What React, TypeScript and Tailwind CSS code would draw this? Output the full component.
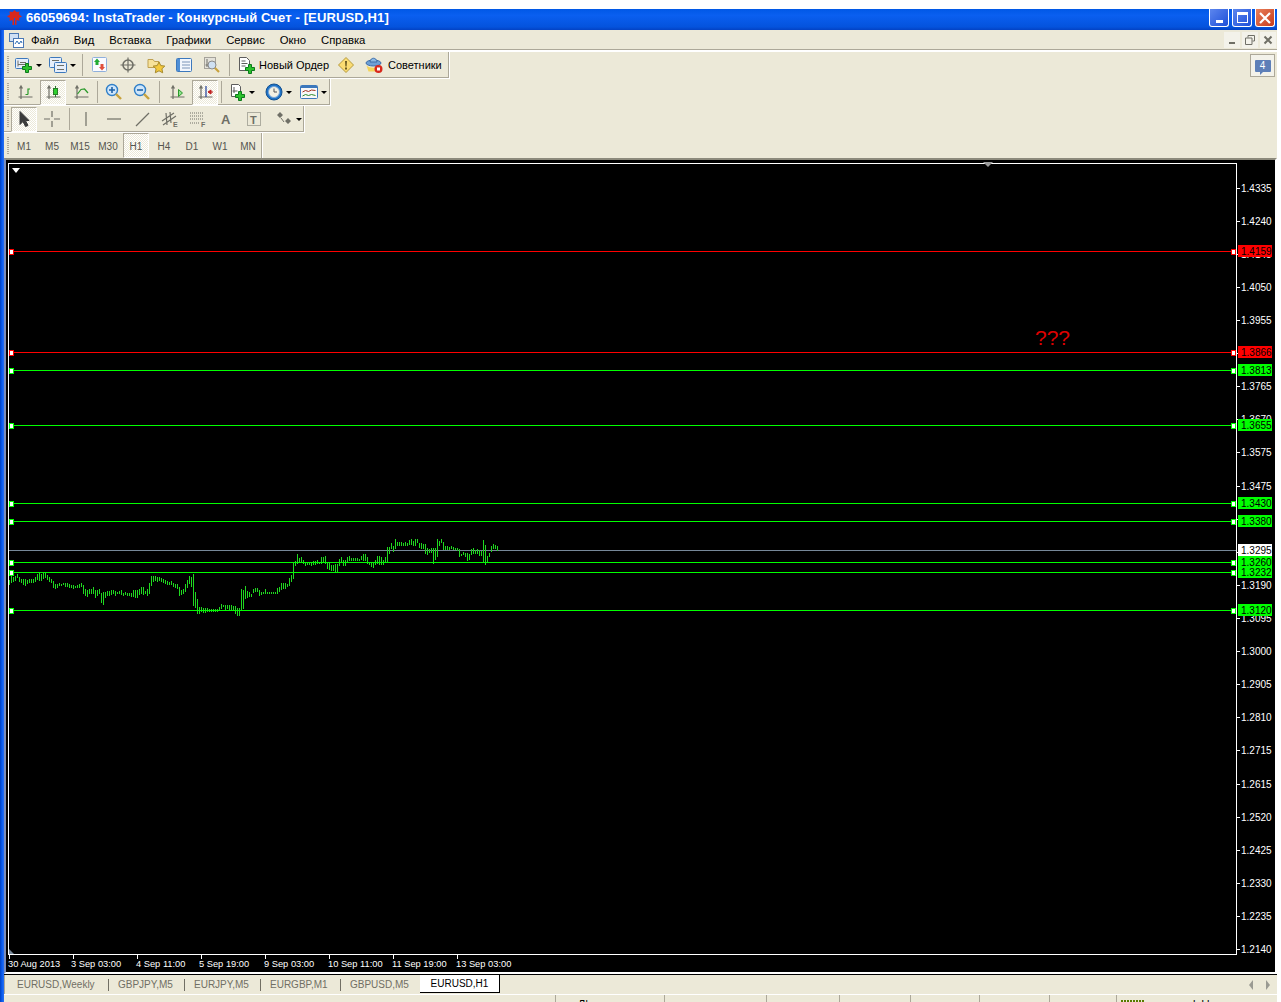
import React from 'react';

const font = { fontFamily: '"Liberation Sans", Arial, sans-serif' };

// high/low read off the chart, in 1/3 px above y=530, bars every 2px from x=9
const bars: [number, number][] = [
  [150,165],[138,160],[140,155],[138,153],[132,145],[142,156],[146,160],[148,165],[148,168],[150,162],[147,160],[147,158],[147,160],[142,155],[132,150],[128,152],[132,153],[128,147],[128,145],[135,150],[141,156],[147,160],[153,175],[163,177],[163,175],[159,168],[163,168],[159,165],[159,171],[159,171],[162,174],[165,175],[165,177],[168,174],[165,174],[162,174],[159,172],[165,192],[177,198],[180,201],[177,192],[177,192],[171,192],[180,204],[180,198],[177,192],[189,219],[186,225],[186,204],[183,198],[183,198],[180,195],[180,192],[183,198],[186,192],[183,192],[180,195],[189,198],[186,195],[189,198],[189,198],[189,201],[180,201],[180,204],[180,204],[177,195],[171,192],[171,195],[183,192],[177,198],[159,192],[138,168],[138,156],[138,153],[141,156],[141,153],[144,156],[147,159],[150,162],[153,165],[156,165],[153,165],[159,171],[162,174],[162,177],[171,198],[180,195],[177,192],[162,186],[150,174],[138,162],[141,171],[132,228],[186,234],[207,252],[231,252],[231,246],[234,249],[234,249],[234,246],[237,246],[237,246],[237,246],[237,246],[237,246],[231,243],[222,237],[225,231],[225,240],[225,237],[225,240],[225,240],[228,240],[228,252],[234,258],[234,258],[177,240],[180,237],[168,207],[183,204],[186,201],[192,201],[177,189],[174,186],[174,186],[180,198],
  [186,195],[186,192],[177,192],[186,192],[186,192],[186,192],[186,192],[186,192],[174,192],[171,186],[159,180],[159,177],[159,177],[162,171],[144,168],[135,156],[96,147],[93,108],[72,102],[84,99],[81,99],[90,102],[96,108],[96,105],[96,105],[96,108],[93,105],[93,105],[90,102],[96,102],[81,102],[81,96],[78,102],[96,117],[99,120],[105,123],[105,123],[102,127],[102,127],[87,108],[81,96],[90,108],[90,108],[81,99],[78,93],[84,93],[84,93],[84,93],[84,93],[87,93],[78,90],[72,93],[72,93],[81,102],[96,105],[99,111],[99,114],[90,105],[78,102],[78,105],[81,105],[90,105],[81,99],[51,96],[51,72],[39,57],[48,66],[27,57],[36,48],[36,48],[36,48],[39,48],[36,48],[39,48],[30,45],[27,45],[33,48],[27,48],[27,39],[39,54],[39,57],[42,57],[42,72],[54,75],[57,69],[54,69],[54,102],[54,90],[27,81],[33,48],[27,39],[36,60],[48,60],[48,60],[51,60],[48,57],[51,60],[54,60],[54,63],[57,81],[72,78],[66,75],[69,81],[69,93],[72,90],[57,75],[54,72],[60,72],[57,72],[60,78],[63,78],[30,96],[45,105],[78,96],[69,81],[48,66],[42,57],[45,57],[48,63],
];

const axisPrices: [string, number][] = [
  ['1.4335',188],['1.4240',221],['1.4145',254],['1.4050',287],['1.3955',320],['1.3860',353],['1.3765',386],['1.3670',419],['1.3575',452],['1.3475',486],['1.3380',519],['1.3285',552],['1.3190',585],['1.3095',618],['1.3000',651],['1.2905',684],['1.2810',717],['1.2715',750],['1.2615',784],['1.2520',817],['1.2425',850],['1.2330',883],['1.2235',916],['1.2140',949],
];

const levels: { y: number; price: string; color: string }[] = [
  { y: 251, price: '1.4159', color: '#ff0000' },
  { y: 352, price: '1.3866', color: '#ff0000' },
  { y: 370, price: '1.3813', color: '#00ff00' },
  { y: 425, price: '1.3655', color: '#00ff00' },
  { y: 503, price: '1.3430', color: '#00ff00' },
  { y: 521, price: '1.3380', color: '#00ff00' },
  { y: 562, price: '1.3260', color: '#00ff00' },
  { y: 572, price: '1.3232', color: '#00ff00' },
  { y: 610, price: '1.3120', color: '#00ff00' },
];

const timeLabels: [string, number, number][] = [
  ['30 Aug 2013', 8, 9],['3 Sep 03:00', 71, 73],['4 Sep 11:00', 136, 137],['5 Sep 19:00', 199, 201],['9 Sep 03:00', 264, 265],['10 Sep 11:00', 328, 329],['11 Sep 19:00', 392, 393],['13 Sep 03:00', 456, 457],
];

function Chart() {
  return (
    <div className="h-[816px] shrink-0 border-2 border-t-[#8c8a7c] border-l-[#7d8db8] border-r-white border-b-white bg-black">
      <svg viewBox="6 160 1269 812" className="block w-[1269px] h-[812px]" style={font}>
        <g shapeRendering="crispEdges">
          <path d="M8.5 163.5H1236.5V954.5H8.5Z" fill="none" stroke="#fff" />
          {axisPrices.map(([p, y]) => <path key={p} d={`M1236 ${y + 0.5}h4`} stroke="#fff" />)}
          {timeLabels.map(([t, , x]) => <path key={t} d={`M${x + 0.5} 955v4`} stroke="#fff" />)}
          <path d="M9 550.5H1236" stroke="#778899" />
          {bars.map(([hi, lo], i) => (
            <path key={i} d={`M${9.5 + i * 2} ${530 + Math.round(hi / 3)}V${530 + Math.round(lo / 3)}`} stroke="#1fd81f" />
          ))}
          {levels.map(l => (
            <g key={l.y}>
              <path d={`M9 ${l.y + 0.5}H1236`} stroke={l.color} />
              <rect x={9.5} y={l.y - 2} width={4} height={5} fill="#fff" stroke={l.color} />
              <rect x={1231.5} y={l.y - 2} width={4} height={5} fill="#fff" stroke={l.color} />
            </g>
          ))}
        </g>
        <path d="M12 168h8l-4 5z" fill="#fff" />
        <path d="M983 162h10l-5 5z" fill="#9a9a9a" />
        <path d="M9 949l5 5h-5z" fill="#778899" />
        <g fill="#fff">
          {axisPrices.map(([p, y]) => <text key={p} x={1241} y={y + 4} fontSize="10">{p}</text>)}
          {timeLabels.map(([t, x]) => <text key={t} x={x} y={967} fontSize="9.300">{t}</text>)}
        </g>
        {levels.map(l => (
          <g key={l.price} fontSize="10">
            <rect x={1238} y={l.y - 6} width={34} height={12} fill={l.color} />
            <text x={1241} y={l.y + 4} fill="#000">{l.price}</text>
          </g>
        ))}
        <rect x={1238} y={544} width={34} height={12} fill="#fff" />
        <text x={1241} y={554} fontSize="10" fill="#000">1.3295</text>
        <text x={1035} y={345} fontSize="21" fill="#dd0000">???</text>
      </svg>
    </div>
  );
}

/* ---- toolbar icons, all on a 18x18 box ---- */

const G = '#6f6f66';

function Ico({ children, w = 18 }: { children: React.ReactNode; w?: number }) {
  return <svg width={w} height={18} viewBox={`0 0 ${w} 18`} className="shrink-0">{children}</svg>;
}

const GreenPlus = ({ x, y }: { x: number; y: number }) => (
  <path transform={`translate(${x} ${y})`} d="M3.500.5h3v3h3v3h-3v3h-3v-3h-3v-3h3z" fill="#2cc22c" stroke="#0c7a1c" />
);

const Axes = () => <path d="M3 2v13M.5 13h14M1.500 4.500L3 2l1.500 2.500" fill="none" stroke={G} strokeWidth="1.200" />;

// the axis icons sit a little right of the middle of their button
const AxisIco = ({ children }: { children: React.ReactNode }) => (
  <Ico><g transform="translate(2 1)"><Axes />{children}</g></Ico>
);

const Icons: Record<string, React.ReactNode> = {
  newChart: <Ico><rect x=".5" y="2.500" width="13" height="10" rx="1" fill="#e6eefa" stroke="#3c78bc" /><path d="M3 4.500v6M3 8.500h8M5 6.500h6" stroke={G} /><GreenPlus x={7} y={7} /></Ico>,
  profiles: <Ico><rect x=".5" y="1.500" width="12" height="10" rx="1" fill="#e6eefa" stroke="#3c78bc" /><rect x="5.500" y="6.500" width="12" height="10" rx="1" fill="#e6eefa" stroke="#3c78bc" /><path d="M3 4.500h7M8 9.500h7M8 13.500h7" stroke={G} /></Ico>,
  market: <Ico><rect x="1.500" y="1.500" width="14" height="14" rx="1" fill="#fbfbff" stroke="#8fb0dc" /><path d="M6 2.500l3 3.500H7.500v3h-3v-3H3z" fill="#22aa33" /><path d="M11 14.500l3-3.500h-1.500V8h-3v3H8z" fill="#e0503c" /></Ico>,
  target: <Ico><circle cx="9" cy="9" r="5" fill="none" stroke={G} strokeWidth="1.600" /><path d="M9 1.500v15M1.500 9h15" stroke={G} strokeWidth="1.200" /></Ico>,
  folderStar: <Ico><path d="M1 3.500h5l1.500 2H12v6H1z" fill="#f7e29a" stroke="#bfa050" /><path d="M12 6l1.800 3.600 4 .5-2.900 2.700.8 4-3.700-2-3.700 2 .8-4-2.900-2.700 4-.5z" fill="#f4c93c" stroke="#a68a2c" /></Ico>,
  navigator: <Ico><rect x="1.500" y="2.500" width="15" height="13" rx="1" fill="#f2f6fd" stroke="#3c78bc" /><rect x="2" y="3" width="3" height="12" fill="#4f8fd6" /><path d="M7 6h8M7 9h8M7 12h8" stroke="#7b94b8" /></Ico>,
  tester: <Ico><rect x="1.500" y="1.500" width="11" height="11" fill="#e4e2da" stroke="#a5a29a" /><path d="M4 3v8M2.500 9h9" stroke={G} /><circle cx="9" cy="9" r="4" fill="#cfe0f2" stroke="#8a8a8a" /><path d="M12 12l4 4" stroke="#c8a23c" strokeWidth="2.200" /></Ico>,
  order: <Ico><path d="M2.500 1.500h7l3 3v10h-10z" fill="#fff" stroke="#5d5d5d" /><path d="M4.500 5h4M4.500 7.500h6M4.500 10h4" stroke="#5d5d5d" /><GreenPlus x={8} y={8} /></Ico>,
  warn: <Ico><path d="M9 1.500L16.500 9 9 16.500 1.500 9z" fill="#fbdc72" stroke="#b59a3c" /><path d="M8 5h2l-.4 5.500H8.400zM8 11.500h2v2H8z" fill="#6b5a20" /></Ico>,
  experts: <Ico><path d="M1.500 9.500c3 3 11 3 14 0l-1 6h-11z" fill="#f4d45a" /><ellipse cx="8.500" cy="7" rx="7.500" ry="3" fill="#6ea0d6" stroke="#3c6ca8" /><path d="M5 6c.4-5 6.600-5 7 0z" fill="#8ab8e4" stroke="#3c6ca8" /><circle cx="13.500" cy="13" r="4" fill="#d8281c" /><rect x="12" y="11.500" width="3" height="3" fill="#fff" /></Ico>,
  bar: <AxisIco><path d="M10 4.500v6M10 10.500H7.500M10 5h2" stroke="#2a9a2a" strokeWidth="1.200" fill="none" /></AxisIco>,
  candle: <AxisIco><path d="M9.500 2v11" stroke="#2a7a2a" /><rect x="7.500" y="4.500" width="4" height="6" fill="#2fd02f" stroke="#2a7a2a" /></AxisIco>,
  line: <AxisIco><path d="M3.500 10L7 5.500 10.500 5l3.500 4" fill="none" stroke="#2a9a2a" strokeWidth="1.200" /></AxisIco>,
  zoomIn: <Ico><circle cx="8" cy="7" r="5.500" fill="#cfe6fa" stroke="#2f7fc8" strokeWidth="1.400" /><path d="M5 7h6M8 4v6" stroke="#1f63a8" strokeWidth="1.600" /><path d="M12 11l5 5" stroke="#c8a23c" strokeWidth="2.400" /></Ico>,
  zoomOut: <Ico><circle cx="8" cy="7" r="5.500" fill="#cfe6fa" stroke="#2f7fc8" strokeWidth="1.400" /><path d="M5 7h6" stroke="#1f63a8" strokeWidth="1.600" /><path d="M12 11l5 5" stroke="#c8a23c" strokeWidth="2.400" /></Ico>,
  shift: <AxisIco><path d="M8.500 5.500l4 3.500-4 3.500z" fill="#8fe08f" stroke="#2a9a2a" /></AxisIco>,
  scroll: <AxisIco><path d="M8 2v11" stroke="#1f3f9a" strokeWidth="1.200" /><path d="M15 8h-4M13 6l-3 2 3 2z" fill="#c02020" stroke="#c02020" /></AxisIco>,
  indicators: <Ico><path d="M3.500 1.500h7l2 2v10h-9z" fill="#fff" stroke="#5d5d5d" /><path d="M6 4v6M4.500 8h5" stroke="#5d5d5d" /><GreenPlus x={7} y={8} /></Ico>,
  clock: <Ico><circle cx="9" cy="9" r="8" fill="#1f74c8" stroke="#14508f" /><circle cx="9" cy="9" r="5.500" fill="#f4f1e4" stroke="#7ba8d8" /><path d="M9 5.500V9h3" stroke="#555" fill="none" /></Ico>,
  templates: <Ico><rect x=".5" y="2.500" width="17" height="13" rx="1" fill="#f8f8f8" stroke="#3c78bc" /><rect x="1" y="3" width="16" height="2" fill="#3c78bc" /><path d="M2.500 9l3-1.500 3 1 3-1.500 4 .5" stroke="#a03020" fill="none" /><path d="M2.500 13l3-1.500 3 1 3-1 4 1" stroke="#2a8a2a" fill="none" /></Ico>,
  cursor: <Ico><path d="M5 1.500v13l3-3 2.500 5 2.500-1-2.500-5H14z" fill="#3b3b3b" stroke="#3b3b3b" /></Ico>,
  cross: <Ico><path d="M9 1v6M9 11v6M1 9h6M11 9h6" stroke={G} strokeWidth="1.200" /></Ico>,
  vline: <Ico><path d="M9 2v14" stroke={G} strokeWidth="1.200" /></Ico>,
  hline: <Ico><path d="M2 9h14" stroke={G} strokeWidth="1.200" /></Ico>,
  trend: <Ico><path d="M3 16L16 3" stroke={G} strokeWidth="1.200" /></Ico>,
  channel: <Ico><path d="M1 11L13 3M2 15L15 6M5 3l1 12M9 2l1 11" stroke={G} strokeWidth="1.200" /><text x="12" y="17" fontSize="7" fontWeight="700" fill={G} style={font}>E</text></Ico>,
  fibo: <Ico><path d="M1 3h13M1 6h13M1 9h13M1 13h10" stroke={G} strokeDasharray="1 1" /><text x="12" y="17" fontSize="7" fontWeight="700" fill={G} style={font}>F</text></Ico>,
  labelA: <Ico><text x="4" y="14" fontSize="13" fontWeight="700" fill={G} style={font}>A</text></Ico>,
  labelT: <Ico><rect x="2.500" y="2.500" width="13" height="13" fill="none" stroke={G} strokeDasharray="1 1" /><text x="5" y="13.500" fontSize="11" fontWeight="700" fill={G} style={font}>T</text></Ico>,
  shapes: <Ico><path d="M5 2l3 3-3 3-3-3zM13 8l3 3-3 3-3-3z" fill={G} /><path d="M6 8l3 4" stroke={G} /></Ico>,
};

const activeCls = 'w-[26px] mx-[1px] border border-t-[#aca899] border-l-[#aca899] border-r-white border-b-white bg-[conic-gradient(#fff_25%,#ece9d8_0_50%,#fff_0_75%,#ece9d8_0)] bg-[length:2px_2px]';

const Caret = () => <span className="ml-[3px] w-0 h-0 border-x-[3px] border-x-transparent border-t-[3px] border-t-black" />;

function Btn({ icon, active, caret, w = 'w-[28px]' }: { icon: string; active?: boolean; caret?: boolean; w?: string }) {
  return (
    <div className={`h-[25px] flex items-center ${caret ? '' : 'justify-center'} ${active ? activeCls : w}`}>
      {Icons[icon]}
      {caret && <Caret />}
    </div>
  );
}

const Sep = ({ w = 'w-[6px]' }: { w?: string }) => (
  <div className={`${w} flex justify-center`}><div className="w-px h-[22px] bg-[#aca899]" /></div>
);

function Toolbar({ width, last, children }: { width: string; last?: boolean; children: React.ReactNode }) {
  return (
    <div className={`${width} h-full flex items-center shrink-0 ${last ? 'border-r border-white shadow-[inset_-1px_0_0_#aca899]' : 'border-r border-b border-white shadow-[inset_-1px_-1px_0_#aca899]'}`}>
      <div className="ml-[3px] mr-[1px] w-[2px] h-[18px] bg-[repeating-linear-gradient(#aca899_0_1px,transparent_1px_2px)]" />
      {children}
    </div>
  );
}

const menuItems = ['Файл', 'Вид', 'Вставка', 'Графики', 'Сервис', 'Окно', 'Справка'];
const periods = ['M1', 'M5', 'M15', 'M30', 'H1', 'H4', 'D1', 'W1', 'MN'];
const tabs = [
  { name: 'EURUSD,Weekly', w: 'w-[102px] pl-[11px]' },
  { name: 'GBPJPY,M5', w: 'w-[76px] pl-[9px] border-l border-[#716f64]' },
  { name: 'EURJPY,M5', w: 'w-[76px] pl-[9px] border-l border-[#716f64]' },
  { name: 'EURGBP,M1', w: 'w-[80px] pl-[9px] border-l border-[#716f64]' },
  { name: 'GBPUSD,M5', w: 'w-[80px] pl-[9px] border-l border-[#716f64]' },
];
const statusCells = ['w-[551px]', 'w-[109px]', 'w-[102px]', 'w-[73px]', 'w-[71px]', 'w-[69px]', 'w-[70px]', 'w-[67px]'];

export default function App() {
  return (
    <div className="w-[1281px] h-[1002px] overflow-hidden bg-white pt-[9px] text-[11px] text-black" style={font}>
      <div className="w-[1277px] h-[993px] flex flex-col bg-[#ece9d8]">
        {/* title bar */}
        <div className="h-[21px] shrink-0 flex items-center bg-[linear-gradient(#0058e6,#0a5ff0_30%,#0453dd_85%,#0342c4)] pl-[7px] pr-[2px] pb-[4px]">
          <svg width="15" height="15" viewBox="0 0 15 15" className="shrink-0">
            <path d="M7.500 0l2 2 3-.5L12 4.500l3 2-3 1.500.5 3-3-1v5H8V8H7v7H5.500v-5l-3 1 .5-3-3-1.500 3-2-.5-3 3 .5z" fill="#d8281c" />
          </svg>
          <span className="ml-[4px] text-[13px] font-bold text-white tracking-[0.13px] whitespace-nowrap">66059694: InstaTrader - Конкурсный Счет - [EURUSD,H1]</span>
          <div className="ml-auto flex items-start gap-[3px] self-start">
            <div className="w-[20px] h-[18px] rounded-b-[3px] border border-t-0 border-white bg-[linear-gradient(135deg,#5c86ee,#1e50d8)] flex items-end justify-center pb-[3px]">
              <div className="w-[7px] h-[3px] bg-white" />
            </div>
            <div className="w-[20px] h-[18px] rounded-b-[3px] border border-t-0 border-white bg-[linear-gradient(135deg,#5c86ee,#1e50d8)] flex items-center justify-center">
              <div className="w-[11px] h-[11px] border border-t-[3px] border-white" />
            </div>
            <div className="w-[20px] h-[18px] rounded-b-[3px] border border-t-0 border-white bg-[linear-gradient(135deg,#e8805c,#c83c1c)] flex items-center justify-center">
              <svg width="12" height="12" viewBox="0 0 12 12"><path d="M1 1l10 10M11 1L1 11" stroke="#fff" strokeWidth="2.200" /></svg>
            </div>
          </div>
        </div>

        <div className="flex-1 min-h-0 flex">
          <div className="w-[4px] shrink-0 bg-[linear-gradient(90deg,#0040c0,#0a5cf0_50%,#2a70f0)]" />
          <div className="flex-1 min-w-0 flex flex-col">
            {/* menu */}
            <div className="h-[22px] shrink-0 flex items-center pl-[5px] border-b-2 border-b-white shadow-[inset_0_-1px_0_#aca899] relative">
              <svg width="15" height="15" viewBox="0 0 15 15" className="shrink-0">
                <rect x=".5" y=".5" width="9" height="8" fill="#cfe0f5" stroke="#4a78b4" />
                <rect x="4.500" y="5.500" width="10" height="9" fill="#fff" stroke="#4a78b4" />
                <path d="M6 11l2-3 2 3 2-3 1 2" stroke="#2f6fb4" fill="none" />
              </svg>
              <div className="ml-[7px] pt-[1px] flex gap-[15px] text-[11.3px]">
                {menuItems.map(m => <span key={m}>{m}</span>)}
              </div>
              <div className="ml-auto mr-[1px] flex gap-[2px]">
                <div className="w-[16px] h-[16px] bg-[#f3f2ea] flex items-end justify-center pb-[4px]"><div className="w-[6px] h-[2px] bg-[#6f6f66]" /></div>
                <div className="w-[16px] h-[16px] bg-[#f3f2ea] flex items-center justify-center">
                  <svg width="10" height="10" viewBox="0 0 10 10"><path d="M3 2.500V.5h6.500v5.500H7.500M.5 3h6.500v6.500H.5z" fill="none" stroke="#6f6f66" /></svg>
                </div>
                <div className="w-[16px] h-[16px] bg-[#f3f2ea] flex items-center justify-center">
                  <svg width="10" height="10" viewBox="0 0 10 10"><path d="M1.500 1.500l7 7M8.500 1.500l-7 7" stroke="#6f6f66" strokeWidth="2" /></svg>
                </div>
              </div>
            </div>

            {/* toolbar rows */}
            <div className="h-[27px] shrink-0 flex items-center">
              <Toolbar width="w-[446px]">
                <Btn icon="newChart" caret w="w-[32px] pl-[5px]" />
                <Btn icon="profiles" caret w="w-[36px] pl-[7px]" />
                <Sep w="w-[8px]" />
                <Btn icon="market" />
                <Btn icon="target" />
                <Btn icon="folderStar" />
                <Btn icon="navigator" />
                <Btn icon="tester" />
                <Sep />
                <div className="w-[100px] flex items-center gap-[4px] pl-[5px] whitespace-nowrap">{Icons.order}<span>Новый Ордер</span></div>
                <Btn icon="warn" />
                <div className="flex items-center gap-[5px] pl-[5px] whitespace-nowrap">{Icons.experts}<span>Советники</span></div>
              </Toolbar>
              <div className="ml-auto mr-[2px] w-[25px] h-[23px] border border-[#aca899] bg-[#f3f2ea] flex items-center justify-center">
                <div className="relative w-[16px] h-[12px] bg-[#5d7fb8] rounded-[1px] flex items-center justify-center text-[10px] leading-none text-white">
                  4
                  <div className="absolute left-[5px] -bottom-[3px] w-0 h-0 border-l-[3px] border-l-[#5d7fb8] border-b-[3px] border-b-transparent" />
                </div>
              </div>
            </div>

            <div className="h-[27px] shrink-0 flex">
              <Toolbar width="w-[327px]">
                <Btn icon="bar" w="w-[29px]" />
                <Btn icon="candle" active />
                <Btn icon="line" />
                <Sep w="w-[4px]" />
                <Btn icon="zoomIn" />
                <Btn icon="zoomOut" />
                <Sep w="w-[8px]" />
                <Btn icon="shift" />
                <Btn icon="scroll" active />
                <Sep w="w-[4px]" />
                <Btn icon="indicators" caret w="w-[42px] pl-[5px]" />
                <Btn icon="clock" caret w="w-[35px]" />
                <Btn icon="templates" caret w="w-[27px]" />
              </Toolbar>
            </div>

            <div className="h-[27px] shrink-0 flex">
              <Toolbar width="w-[301px]">
                <Btn icon="cursor" active />
                <Btn icon="cross" />
                <Sep />
                <Btn icon="vline" />
                <Btn icon="hline" />
                <Btn icon="trend" />
                <Btn icon="channel" />
                <Btn icon="fibo" />
                <Btn icon="labelA" />
                <Btn icon="labelT" />
                <Btn icon="shapes" caret w="w-[32px] pl-[7px]" />
              </Toolbar>
            </div>

            <div className="h-[25px] shrink-0 flex">
              <Toolbar width="w-[259px]" last>
                {periods.map(p => (
                  <div key={p} className={`h-[25px] pt-[1px] flex items-center justify-center text-[10px] text-[#55554e] ${p === 'H1' ? activeCls : 'w-[28px]'}`}>{p}</div>
                ))}
              </Toolbar>
            </div>

            <Chart />

            {/* tabs */}
            <div className="h-[21px] shrink-0 flex items-start border-t border-black border-b border-b-white">
              <div className="pl-[1px] border-l border-[#aca899] h-full flex items-center text-[10px] text-[#716f64]">
                {tabs.map(t => (
                  <div key={t.name} className={`h-[12px] flex items-center whitespace-nowrap ${t.w}`}>{t.name}</div>
                ))}
              </div>
              <div className="w-[80px] h-[18px] flex items-center justify-center bg-white border-r border-b border-black text-[10px]">EURUSD,H1</div>
              <div className="ml-auto mr-[7px] h-full flex items-center gap-[13px]">
                <div className="w-0 h-0 border-y-[5px] border-y-transparent border-r-[4px] border-r-[#9a9a92]" />
                <div className="w-0 h-0 border-y-[5px] border-y-transparent border-l-[4px] border-l-[#9a9a92]" />
              </div>
            </div>

            {/* status bar, cut off by the bottom of the window */}
            <div className="h-[7px] shrink-0 flex overflow-hidden text-[11px] leading-none">
              {statusCells.map((w, i) => (
                <div key={i} className={`${w} h-[7px] shrink-0 ${i > 0 ? 'border-l border-[#aca899]' : ''} relative`}>
                  {i === 1 && <span className="absolute left-[22px] top-[4px]">Л|</span>}
                </div>
              ))}
              <div className="flex-1 border-l border-[#aca899] pl-[4px] relative">
                <div className="mt-[5px] w-[23px] h-[2px] bg-[repeating-linear-gradient(90deg,#5a7a00_0_2px,transparent_2px_3px)]" />
                <span className="absolute left-[76px] top-[4px] whitespace-nowrap">l&nbsp;&nbsp;l&nbsp;l</span>
              </div>
            </div>
          </div>
        </div>
      </div>
    </div>
  );
}
